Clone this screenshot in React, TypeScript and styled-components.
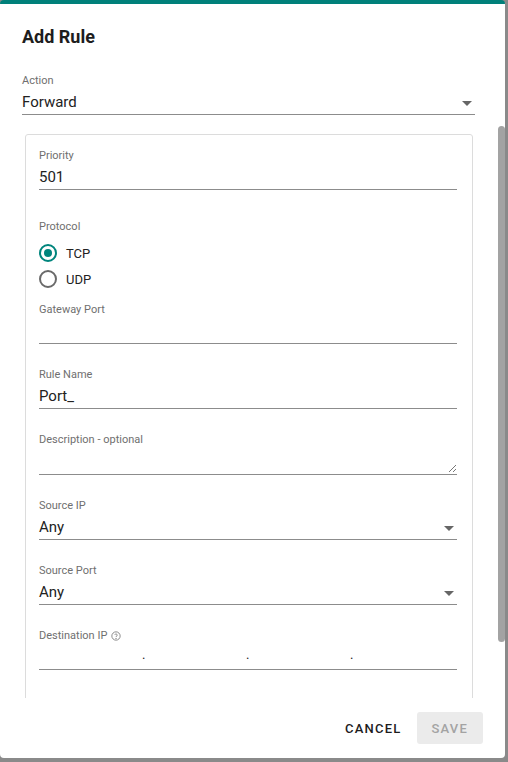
import React from "react";
import styled, { createGlobalStyle } from "styled-components";

const Global = createGlobalStyle`
  body { margin: 0; background: #8a8a8a; font-family: Roboto, "Liberation Sans", sans-serif; }
`;

const Dialog = styled.div`
  position: relative;
  width: 505px;
  height: 758px;
  background: #fff;
  border-top: 4px solid #00807a;
  border-radius: 4px;
  box-sizing: border-box;
  display: flex;
  flex-direction: column;
  overflow: hidden;
`;

const Title = styled.h2`
  margin: 0;
  padding: 21px 22px 0;
  height: 49px;
  box-sizing: border-box;
  font-size: 18px;
  font-weight: 700;
  color: #1d1d1d;
  line-height: 24px;
`;

const Body = styled.div`
  flex: 1;
  overflow: hidden;
  padding: 21px 30px 0 22px;
`;

const Thumb = styled.div`
  position: absolute;
  right: 0;
  top: 122px;
  width: 7px;
  height: 516px;
  border-radius: 4px;
  background: #a3a3a3;
`;

const Field = styled.div<{ gap?: number }>`
  margin-bottom: ${(p) => p.gap ?? 24}px;
`;

const Label = styled.div`
  font-size: 11px;
  line-height: 14px;
  color: #6f6f6f;
  display: flex;
  align-items: center;
  gap: 4px;
`;

const Input = styled.div<{ tall?: boolean }>`
  height: ${(p) => (p.tall ? 28 : 27)}px;
  border-bottom: 1px solid #8c8c8c;
  box-sizing: border-box;
  display: flex;
  align-items: center;
  font-size: 15px;
  color: #222;
  position: relative;
  padding-top: 2px;
`;

const Caret = styled.div`
  position: absolute;
  right: 3px;
  top: 13px;
  border-left: 5px solid transparent;
  border-right: 5px solid transparent;
  border-top: 5px solid #666;
`;

const Card = styled.div`
  margin-top: 19px;
  margin-left: 3px;
  margin-right: 2px;
  border: 1px solid #dcdcdc;
  border-radius: 3px;
  padding: 14px 15px 40px 13px;
`;

const RadioRow = styled.label`
  display: flex;
  align-items: center;
  height: 26px;
  gap: 9px;
  font-size: 13px;
  color: #222;
`;

const Circle = styled.span<{ on?: boolean }>`
  width: 14px;
  height: 14px;
  border-radius: 50%;
  border: 2px solid ${(p) => (p.on ? "#00857d" : "#6a6a6a")};
  display: flex;
  align-items: center;
  justify-content: center;
  &::after {
    content: "";
    width: 8px;
    height: 8px;
    border-radius: 50%;
    background: ${(p) => (p.on ? "#00857d" : "transparent")};
  }
`;

const Dots = styled.div`
  flex: 1;
  display: grid;
  grid-template-columns: 104px 104px 108px;
  padding-left: 103px;
  font-size: 13px;
  line-height: 13px;
  margin-top: -6px;
`;

const Footer = styled.div`
  height: 60px;
  display: flex;
  justify-content: flex-end;
  align-items: center;
  gap: 15px;
  padding: 0 22px 0 0;
`;

const Button = styled.button<{ disabled?: boolean }>`
  font-family: Roboto, "Liberation Sans", sans-serif;
  font-size: 13px;
  font-weight: 500;
  letter-spacing: 1.2px;
  height: 32px;
  padding: 0 ${(p) => (p.disabled ? 15 : 0)}px;
  border: none;
  border-radius: 3px;
  background: ${(p) => (p.disabled ? "#ebebeb" : "transparent")};
  color: ${(p) => (p.disabled ? "#a3a3a3" : "#1d1d1d")};
`;

const Resize = () => (
  <svg width="7" height="7" viewBox="0 0 7 7" style={{ position: "absolute", right: 1, bottom: 2 }}>
    <path d="M7 0L0 7M7 4L4 7" stroke="#777" strokeWidth="1" />
  </svg>
);

const Help = () => (
  <svg width="10" height="10" viewBox="0 0 24 24" fill="none" stroke="#777" strokeWidth="2">
    <circle cx="12" cy="12" r="10" />
    <path d="M9.1 9a3 3 0 0 1 5.8 1c0 2-3 2.5-3 4.5" />
    <circle cx="12" cy="18" r="0.6" fill="#777" />
  </svg>
);

export default function App() {
  return (
    <>
      <Global />
      <Dialog>
        <Title>Add Rule</Title>
        <Body>
          <Field gap={0}>
            <Label>Action</Label>
            <Input>Forward<Caret /></Input>
          </Field>
          <Card>
            <Field gap={30}>
              <Label>Priority</Label>
              <Input>501</Input>
            </Field>
            <Field gap={11}>
              <Label>Protocol</Label>
              <div style={{ marginTop: 6 }}>
                <RadioRow><Circle on />TCP</RadioRow>
                <RadioRow><Circle />UDP</RadioRow>
              </div>
            </Field>
            <Field>
              <Label>Gateway Port</Label>
              <Input />
            </Field>
            <Field>
              <Label>Rule Name</Label>
              <Input>Port_</Input>
            </Field>
            <Field>
              <Label>Description - optional</Label>
              <Input tall><Resize /></Input>
            </Field>
            <Field>
              <Label>Source IP</Label>
              <Input>Any<Caret /></Input>
            </Field>
            <Field>
              <Label>Source Port</Label>
              <Input>Any<Caret /></Input>
            </Field>
            <Field>
              <Label>Destination IP <Help /></Label>
              <Input><Dots><span>.</span><span>.</span><span>.</span></Dots></Input>
            </Field>
          </Card>
        </Body>
        <Footer>
          <Button>CANCEL</Button>
          <Button disabled>SAVE</Button>
        </Footer>
        <Thumb />
      </Dialog>
    </>
  );
}
